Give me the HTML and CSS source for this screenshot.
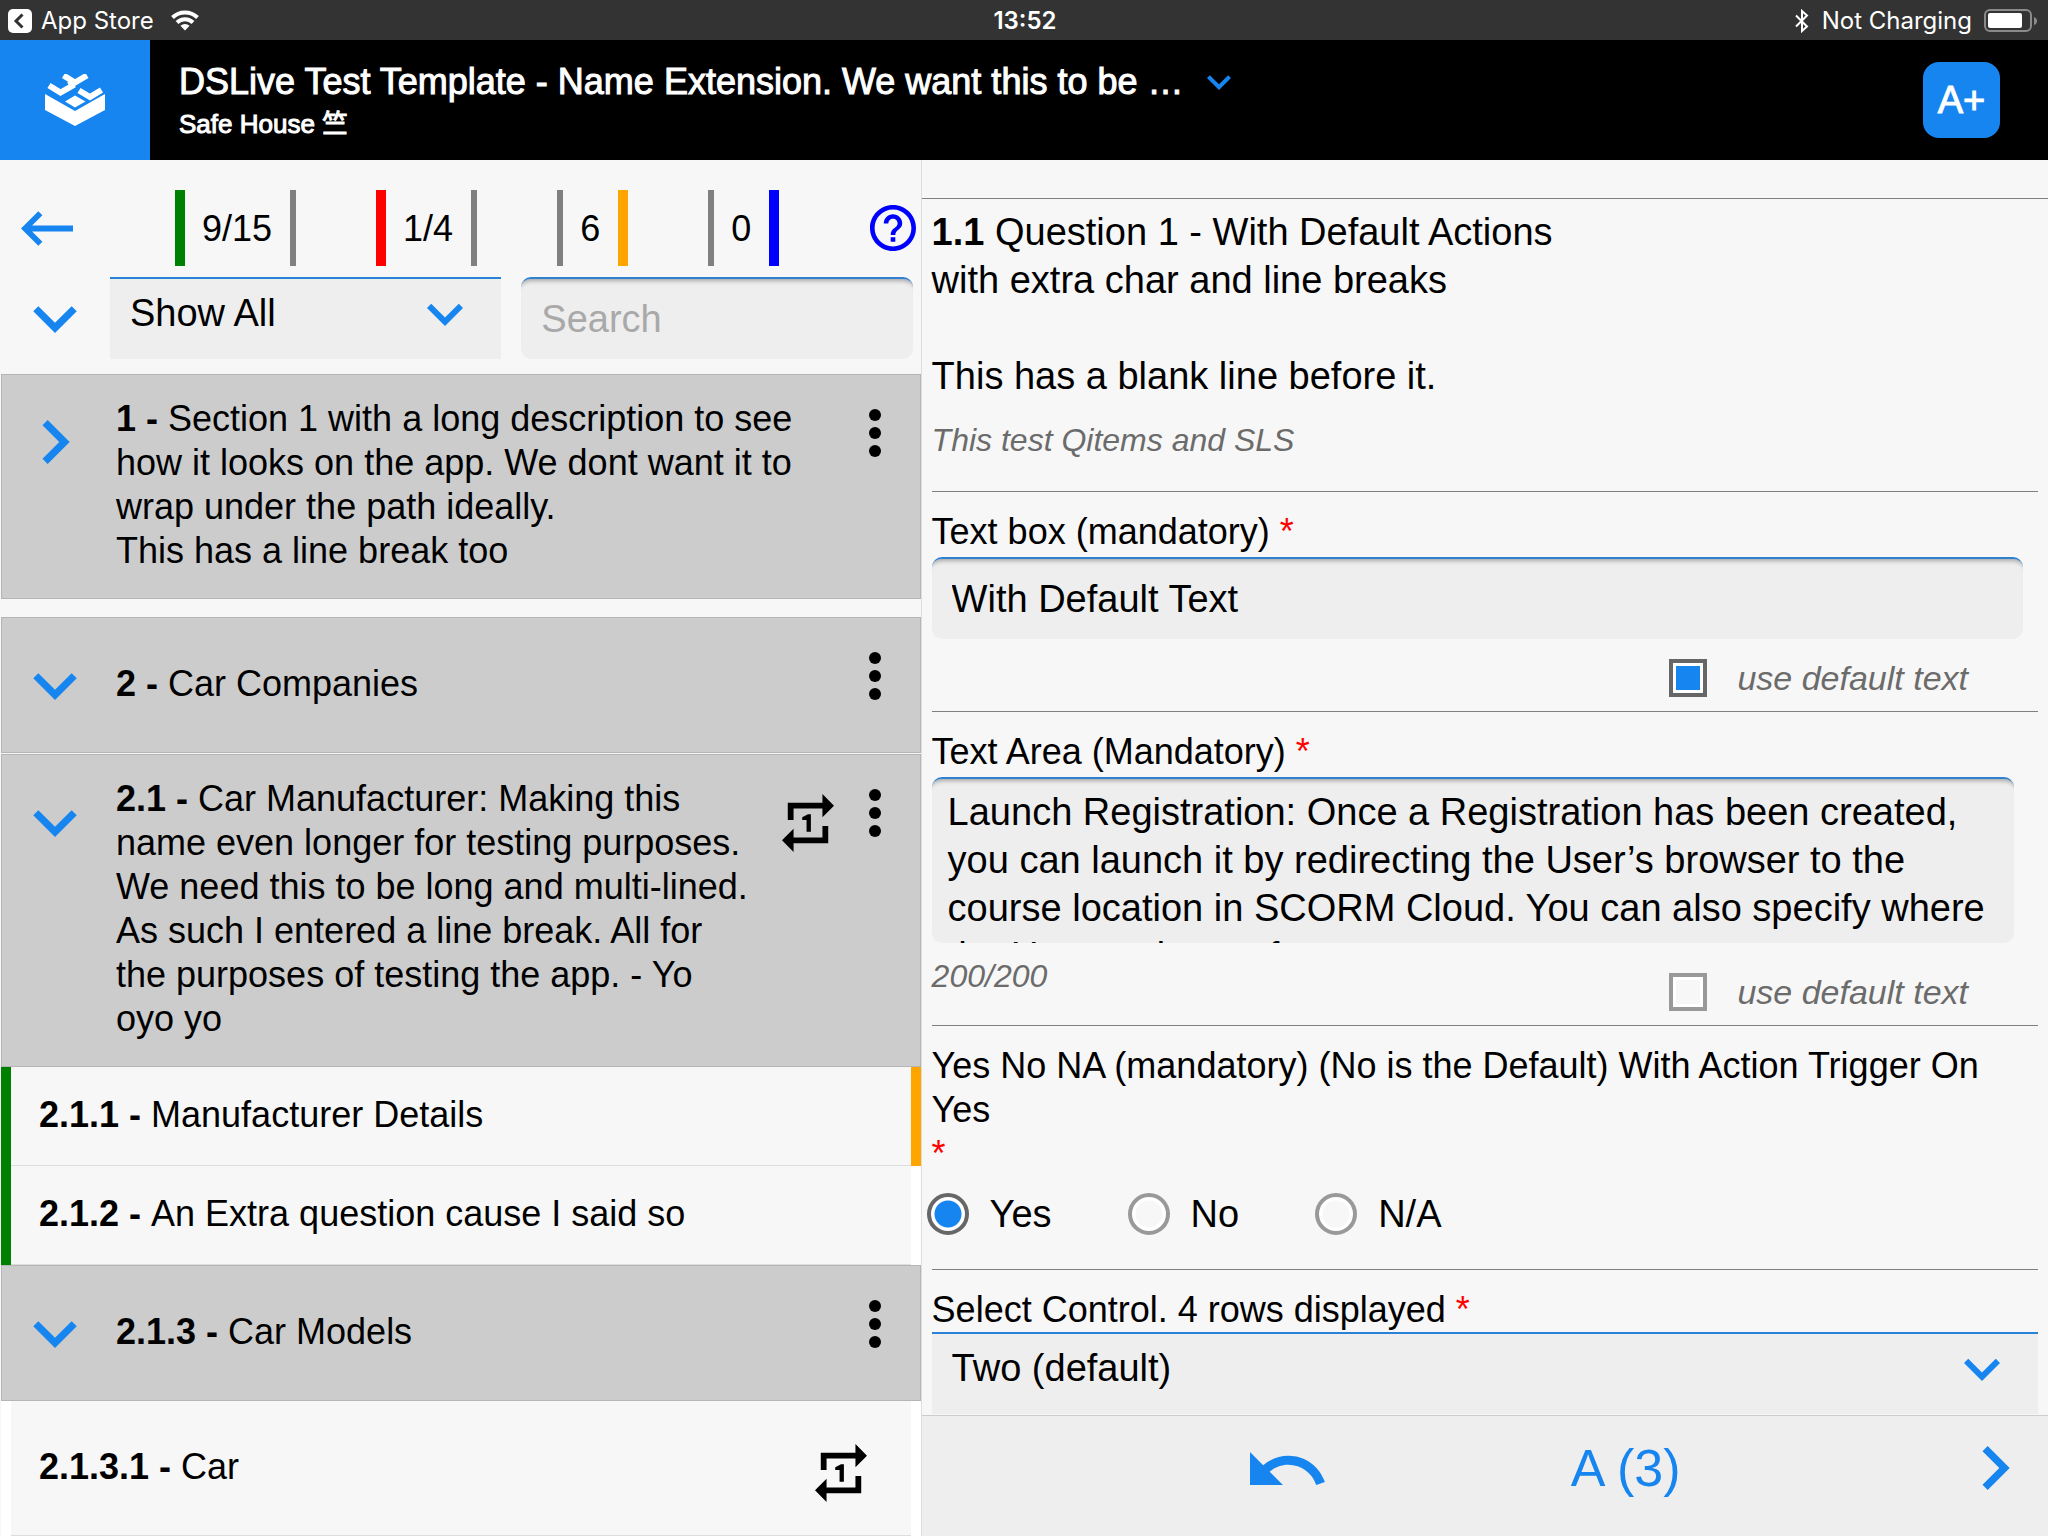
FILE: index.html
```html
<!DOCTYPE html>
<html lang="en">
<head>
<meta charset="utf-8">
<meta name="viewport" content="width=device-width, initial-scale=1">
<title>DSLive Test Template</title>
<link rel="stylesheet" href="styles.css">
</head>
<body>
<svg class="sprite" aria-hidden="true">
  <symbol id="i-down" viewBox="6 8 12 8"><path d="M7.41 8.59L12 13.17l4.59-4.58L18 10l-6 6-6-6z"/></symbol>
  <symbol id="i-right" viewBox="8 6 8 12"><path d="M8.59 16.59L13.17 12 8.59 7.41 10 6l6 6-6 6z"/></symbol>
  <symbol id="i-back" viewBox="3 6 18 12"><path d="M21 11H6.83l3.58-3.59L9 6l-6 6 6 6 1.41-1.41L6.83 13H21z"/></symbol>
  <symbol id="i-help" viewBox="2 2 20 20"><path d="M11 18h2v-2h-2v2zm1-16C6.48 2 2 6.48 2 12s4.48 10 10 10 10-4.48 10-10S17.52 2 12 2zm0 18c-4.41 0-8-3.59-8-8s3.59-8 8-8 8 3.59 8 8-3.59 8-8 8zm0-14c-2.21 0-4 1.79-4 4h2c0-1.1.9-2 2-2s2 .9 2 2c0 2-3 1.75-3 5h2c0-2.25 3-2.5 3-5 0-2.21-1.79-4-4-4z"/></symbol>
  <symbol id="i-more" viewBox="10 4 4 16"><circle cx="12" cy="6" r="2"/><circle cx="12" cy="12" r="2"/><circle cx="12" cy="18" r="2"/></symbol>
  <symbol id="i-repeat" viewBox="3 2 18 20"><path d="M7 7h10v3l4-4-4-4v3H5v6h2V7zm10 10H7v-3l-4 4 4 4v-3h12v-6h-2v4zm-4-2V9h-1l-2 1v1h1.500v4H13z"/></symbol>
  <symbol id="i-undo" viewBox="2 7 20.500 9"><path d="M12.5 8c-2.650 0-5.050.99-6.900 2.600L2 7v9h9l-3.620-3.620c1.390-1.160 3.160-1.880 5.120-1.880 3.540 0 6.550 2.310 7.600 5.500l2.370-.78C21.080 11.030 17.150 8 12.500 8z"/></symbol>
</svg>

<div class="app">
  <div class="status">
    <div class="status-side">
      <svg width="24" height="24" viewBox="0 0 24 24"><rect width="24" height="24" rx="5" fill="#fff"/><path d="M14.500 5.500L8 12l6.500 6.500" fill="none" stroke="#333" stroke-width="3"/></svg>
      <span class="status-app">App Store</span>
      <svg class="wifi" width="28" height="21" viewBox="0 0 28 21"><g fill="none" stroke="#fff" stroke-width="4"><path d="M1.500 7.500a18 18 0 0 1 25 0"/><path d="M6 12.500a11.500 11.500 0 0 1 16 0"/></g><path d="M14 20.500l-4.600-4.700a7 7 0 0 1 9.200 0z" fill="#fff"/></svg>
    </div>
    <time class="clock">13:52</time>
    <div class="status-side status-right">
      <svg width="16" height="24" viewBox="0 0 16 24"><path d="M2 6.500l11 11L8 22V2l5 4.500-11 11" fill="none" stroke="#fff" stroke-width="2"/></svg>
      <span class="status-charge">Not Charging</span>
      <svg width="54" height="24" viewBox="0 0 54 24"><rect x="1" y="1" width="46" height="21" rx="5" fill="none" stroke="#8a8a8a" stroke-width="2"/><rect x="4" y="4" width="34" height="15" rx="2" fill="#fff"/><path d="M50 8q3 1 3 4t-3 4z" fill="#8a8a8a"/></svg>
    </div>
  </div>

  <header class="header">
    <a class="logo" href="#" aria-label="Home">
      <svg width="60" height="52" viewBox="0 0 60 52"><path fill="#fff" d="M0 20l30 17 30-17v16L30 52 0 36zM20 27.500L30 21.500l10.500 6L30 33.500z"/><g fill="none" stroke="#fff" stroke-width="6"><path d="M18.500 1.500L30 8.500l12-7"/><path d="M4 11.500l11.500 7L27 12l-2-5"/><path d="M34 16.500l11 6.500 11.500-7"/></g></svg>
    </a>
    <div class="heading">
      <h1 class="title">DSLive Test Template - Name Extension. We want this to be …
        <button class="icon-btn title-toggle" aria-label="Show full name"><svg class="chev-xs"><use href="#i-down"/></svg></button></h1>
      <p class="subtitle">Safe House 竺</p>
    </div>
    <button class="font-btn">A+</button>
  </header>

  <main class="main">
    <nav class="side">
      <div class="stats-row">
        <button class="icon-btn" aria-label="Back"><svg class="ico-back"><use href="#i-back"/></svg></button>
        <div class="stats">
          <span class="stat stat-left green">9/15</span>
          <span class="stat stat-left red">1/4</span>
          <span class="stat stat-right orange">6</span>
          <span class="stat stat-right blue">0</span>
        </div>
        <button class="icon-btn help" aria-label="Help"><svg class="ico-help"><use href="#i-help"/></svg></button>
      </div>
      <div class="filter-row">
        <button class="icon-btn expand" aria-label="Expand all"><svg class="chev-lg"><use href="#i-down"/></svg></button>
        <div class="filters">
          <div class="select">
            <select aria-label="Filter"><option>Show All</option></select>
            <svg class="chev-md"><use href="#i-down"/></svg>
          </div>
          <input class="field search" type="search" placeholder="Search" aria-label="Search">
        </div>
      </div>

      <div class="tree">
        <section class="node spaced">
          <button class="icon-btn toggle" aria-label="Expand"><svg class="chev-side"><use href="#i-right"/></svg></button>
          <p class="node-title"><b>1 - </b>Section 1 with a long description to see how it looks on the app. We dont want it to wrap under the path ideally.<br>This has a line break too</p>
          <button class="icon-btn more" aria-label="More"><svg class="ico-more"><use href="#i-more"/></svg></button>
        </section>
        <section class="node">
          <button class="icon-btn toggle" aria-label="Collapse"><svg class="chev-lg"><use href="#i-down"/></svg></button>
          <p class="node-title"><b>2 - </b>Car Companies</p>
          <button class="icon-btn more" aria-label="More"><svg class="ico-more"><use href="#i-more"/></svg></button>
        </section>
        <section class="node joined">
          <button class="icon-btn toggle" aria-label="Collapse"><svg class="chev-lg"><use href="#i-down"/></svg></button>
          <p class="node-title"><b>2.1 - </b>Car Manufacturer: Making this name even longer for testing purposes. We need this to be long and multi-lined. As such I entered a line break. All for the purposes of testing the app. - Yo oyo yo</p>
          <button class="icon-btn repeat" aria-label="Repeat"><svg class="ico-repeat"><use href="#i-repeat"/></svg></button>
          <button class="icon-btn more" aria-label="More"><svg class="ico-more"><use href="#i-more"/></svg></button>
        </section>
        <a class="leaf done flagged" href="#"><span><b>2.1.1 - </b>Manufacturer Details</span></a>
        <a class="leaf done" href="#"><span><b>2.1.2 - </b>An Extra question cause I said so</span></a>
        <section class="node">
          <button class="icon-btn toggle" aria-label="Collapse"><svg class="chev-lg"><use href="#i-down"/></svg></button>
          <p class="node-title"><b>2.1.3 - </b>Car Models</p>
          <button class="icon-btn more" aria-label="More"><svg class="ico-more"><use href="#i-more"/></svg></button>
        </section>
        <a class="leaf tall" href="#"><span><b>2.1.3.1 - </b>Car</span><svg class="ico-repeat"><use href="#i-repeat"/></svg></a>
      </div>
    </nav>

    <div class="detail">
      <form class="form">
        <div class="question">
          <p class="question-text"><b>1.1</b> Question 1 - With Default Actions<br>with extra char and line breaks<br><br>This has a blank line before it.</p>
          <p class="note">This test Qitems and SLS</p>
        </div>

        <div class="group">
          <label class="label" for="tb">Text box (mandatory) <span class="req">*</span></label>
          <input class="field text" id="tb" type="text" value="With Default Text">
          <div class="options">
            <label class="check"><input type="checkbox" checked>use default text</label>
          </div>
        </div>

        <div class="group">
          <label class="label" for="ta">Text Area (Mandatory) <span class="req">*</span></label>
          <textarea class="field area" id="ta">Launch Registration: Once a Registration has been created, you can launch it by redirecting the User’s browser to the course location in SCORM Cloud. You can also specify where the User ends up after </textarea>
          <div class="options counted">
            <span class="note">200/200</span>
            <label class="check"><input type="checkbox">use default text</label>
          </div>
        </div>

        <fieldset class="group">
          <div class="label" id="yn">Yes No NA (mandatory) (No is the Default) With Action Trigger On Yes<br><span class="req">*</span></div>
          <div class="radios" role="radiogroup" aria-labelledby="yn">
            <label class="radio"><input type="radio" name="yn" checked>Yes</label>
            <label class="radio"><input type="radio" name="yn">No</label>
            <label class="radio"><input type="radio" name="yn">N/A</label>
          </div>
        </fieldset>

        <div class="group">
          <label class="label" for="sel">Select Control. 4 rows displayed <span class="req">*</span></label>
          <div class="select">
            <select id="sel"><option>Two (default)</option></select>
            <svg class="chev-md"><use href="#i-down"/></svg>
          </div>
        </div>
      </form>

      <footer class="footer">
        <button class="icon-btn undo" aria-label="Undo"><svg class="ico-undo"><use href="#i-undo"/></svg></button>
        <button class="icon-btn actions">A (3)</button>
        <button class="icon-btn next" aria-label="Next"><svg class="chev-side"><use href="#i-right"/></svg></button>
      </footer>
    </div>
  </main>
</div>
</body>
</html>
```
FILE: styles.css
```css
:root {
  --blue: #1785ef;
  --line: #808080;
  --page: #f7f7f7;
  --fill: #eee;
  --node: #ccc;
}

* { box-sizing: border-box; }

body {
  margin: 0;
  background: var(--page);
  color: #000;
  font: 36px/44px "Liberation Sans", Arial, "Noto Sans CJK SC", sans-serif;
}

h1, p { margin: 0; font-weight: 400; }
svg { display: block; flex: none; fill: currentColor; }
.sprite { position: absolute; width: 0; height: 0; }

button, input, select, textarea { font: inherit; color: inherit; margin: 0; }

.icon-btn {
  display: flex;
  align-items: center;
  justify-content: center;
  flex: none;
  padding: 0;
  border: 0;
  background: none;
  color: var(--blue);
}

.chev-xs { width: 24px; height: 16px; }
.chev-md { width: 36px; height: 24px; }
.chev-lg { width: 44px; height: 29px; }
.chev-side { width: 30px; height: 44px; }
.ico-back { width: 52px; height: 35px; }
.ico-help { width: 46px; height: 46px; }
.ico-more { width: 12px; height: 48px; }
.ico-repeat { width: 52px; height: 58px; }
.ico-undo { width: 75px; height: 33px; }

.app {
  display: grid;
  grid-template-rows: auto auto minmax(0, 1fr);
  height: 100vh;
}

/* Status bar */
.status {
  display: grid;
  grid-template-columns: 1fr auto 1fr;
  align-items: center;
  height: 40px;
  padding: 1px 10px 0 8px;
  background: #333;
  color: #fff;
  font: 24px/38px Inter, sans-serif;
}
.status-side { display: flex; align-items: center; gap: 9px; }
.status-right { justify-content: flex-end; gap: 12px; }
.wifi { margin-left: 8px; }
.clock { padding-left: 4px; font-weight: 600; }

/* Header */
.header { display: flex; align-items: center; height: 120px; background: #000; color: #fff; }
.logo {
  display: grid;
  place-items: center;
  align-self: stretch;
  width: 150px;
  background: var(--blue);
}
.heading { flex: 1; min-width: 0; padding-left: 29px; }
.title {
  display: flex;
  align-items: center;
  gap: 24px;
  margin-bottom: 4px;
  font-size: 36px;
  line-height: 44px;
  white-space: nowrap;
  -webkit-text-stroke: 1px #fff;
}
.subtitle { font-size: 26px; line-height: 32px; -webkit-text-stroke: 1px #fff; }
.font-btn {
  width: 77px;
  height: 76px;
  margin-right: 48px;
  padding: 0;
  border: 0;
  border-radius: 16px;
  background: var(--blue);
  color: #fff;
  font-size: 38px;
  -webkit-text-stroke: 1px #fff;
}

.main { display: grid; grid-template-columns: 45% minmax(0, 1fr); min-height: 0; }

/* Left panel */
.side { min-width: 0; overflow: hidden; border-right: 1px solid #ddd; }
.stats-row { display: flex; align-items: center; padding: 30px 5px 0 21px; }
.stats { display: flex; gap: 80px; margin-left: 102px; }
.stat { padding: 2px 18px 0 17px; line-height: 74px; }
.stat-left { border-left: 10px solid; border-right: 6px solid var(--line); }
.stat-right { border-left: 6px solid var(--line); border-right: 10px solid; }
.green { border-left-color: green; }
.red { border-left-color: red; }
.orange { border-right-color: orange; }
.blue { border-right-color: blue; }
.help { margin-left: auto; color: blue; }

.filter-row { display: flex; padding: 11px 8px 0 0; }
.expand { width: 110px; }
.filters {
  display: grid;
  grid-template-columns: repeat(2, minmax(0, 1fr));
  gap: 20px;
  flex: 1;
}

.select { display: grid; grid-template-columns: minmax(0, 1fr); align-items: center; }
.select select, .select svg { grid-area: 1 / 1; }
.select select {
  appearance: none;
  width: 100%;
  height: 82px;
  padding: 0 80px 12px 20px;
  border: 0;
  border-top: 2px solid #2a82d8;
  border-radius: 0;
  background: var(--fill);
  font-size: 38px;
}
.select svg {
  justify-self: end;
  margin: 0 38px 8px 0;
  color: var(--blue);
  pointer-events: none;
}

.field {
  display: block;
  appearance: none;
  height: 82px;
  padding: 0 20px;
  border: 0;
  border-top: 2px solid #2f80cf;
  border-radius: 10px;
  outline: 0;
  background: var(--fill);
  box-shadow: inset 0 6px 4px -4px rgba(0, 0, 0, .3);
  font-size: 38px;
}
.field::placeholder { color: #a9a9a9; opacity: 1; }

.tree { margin-top: 15px; padding-left: 1px; }
.node {
  display: flex;
  align-items: flex-start;
  min-height: 136px;
  border: 1px solid #b5b5b5;
  background: var(--node);
}
.spaced { margin-bottom: 18px; }
.joined { margin-top: 1px; }
.toggle { width: 106px; height: 134px; }
.node-title { flex: 1; align-self: center; padding: 22px 0 25px 8px; }
.repeat { height: 136px; margin-left: 26px; color: #000; }
.more { height: 116px; margin: 0 39px 0 35px; color: #000; }

.leaf {
  display: flex;
  align-items: center;
  justify-content: space-between;
  min-height: 99px;
  padding: 0 44px 4px 28px;
  border: solid #fff;
  border-width: 0 10px;
  box-shadow: inset 0 -1px #ddd;
  color: #000;
  text-decoration: none;
}
.done { border-left-color: green; }
.flagged { border-right-color: orange; }
.tall { min-height: 135px; }
.tall .ico-repeat { margin-top: 12px; }

/* Right panel */
.detail { display: flex; flex-direction: column; min-width: 0; min-height: 0; }
.form { flex: 1; min-height: 0; overflow: hidden; padding-top: 38px; }

.question { padding: 9px 10px 32px; border-top: 1px solid var(--line); }
.question-text { font-size: 38px; line-height: 48px; }
.note { color: #6b6b6b; font-size: 32px; line-height: 38px; font-style: italic; }
.question .note { margin-top: 21px; }

.group {
  min-width: 0;
  margin: 0 10px;
  padding: 18px 0 0;
  border: 0;
  border-top: 1px solid var(--line);
}
.label { display: block; }
.req { color: red; }
.text { width: calc(100% - 15px); margin-top: 3px; }
.area {
  width: calc(100% - 24px);
  height: 166px;
  margin-top: 3px;
  padding: 9px 16px 0;
  overflow: hidden;
  resize: none;
  line-height: 48px;
}

.options { display: flex; justify-content: flex-end; padding: 20px 70px 14px 0; }
.counted { justify-content: space-between; align-items: flex-end; padding-top: 14px; }
.counted .note { align-self: flex-start; }
.counted .check { margin-top: 16px; }
.check {
  display: flex;
  align-items: center;
  gap: 30px;
  color: #6b6b6b;
  font-size: 34px;
  line-height: 38px;
  font-style: italic;
}
.check input, .radio input {
  appearance: none;
  flex: none;
  width: 38px;
  height: 38px;
  padding: 3px;
  border: 4px solid #999;
  background: linear-gradient(var(--page), var(--page)) content-box, #fff;
}
.check input:checked, .radio input:checked {
  border-color: #666;
  background: linear-gradient(var(--blue), var(--blue)) content-box, #fff;
}

.radios { display: flex; gap: 76px; margin-left: -5px; padding: 17px 0 34px; }
.radio { display: flex; align-items: center; gap: 21px; font-size: 38px; line-height: 42px; }
.radio input {
  width: 42px;
  height: 42px;
  border-radius: 50%;
  background: radial-gradient(circle, var(--page) 13px, #fff 14px);
}
.radio input:checked { background: radial-gradient(circle, var(--blue) 13px, #fff 14px); }

.footer {
  display: grid;
  grid-template-columns: 7fr 5fr 5fr;
  height: 121px;
  padding: 0 0 16px 15%;
  border-top: 1px solid #ccc;
  background: var(--fill);
}
.actions { font-size: 52px; }
.next { justify-content: flex-end; padding-right: 38px; }
```
